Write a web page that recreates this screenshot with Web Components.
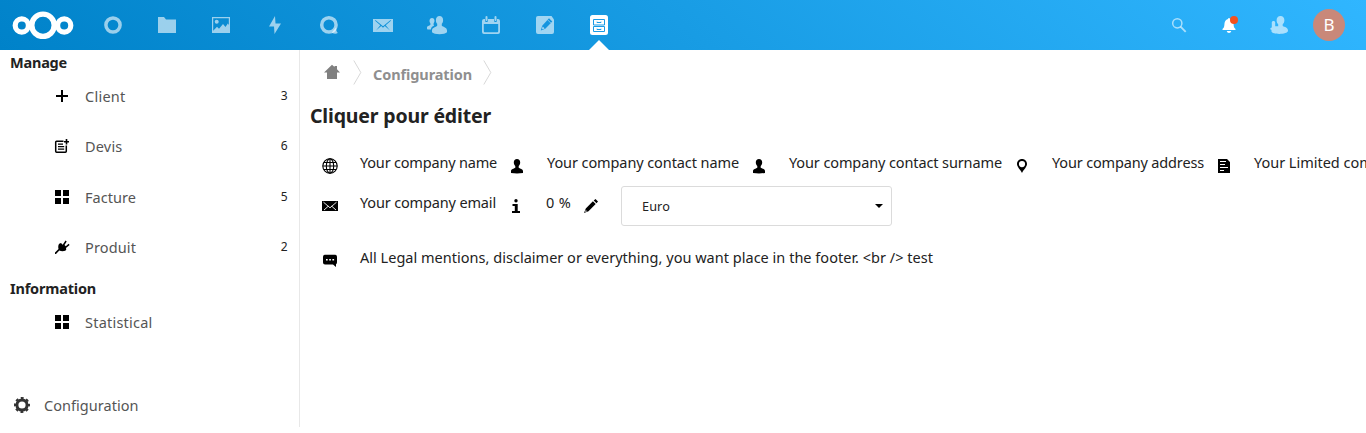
<!DOCTYPE html>
<html lang="fr">
<head>
<meta charset="utf-8">
<title>Configuration</title>
<style>
html,body{margin:0;height:100%;overflow:hidden;background:#fff}
body{font-family:"Noto Sans","Open Sans",sans-serif;font-size:14.5px;color:#222}
</style>
</head>
<body>
<invoice-app></invoice-app>
<script>
const define=(name,html,setup)=>{
  const t=document.createElement('template');t.innerHTML=html;
  customElements.define(name,class extends HTMLElement{
    constructor(){super();this.attachShadow({mode:'open'}).append(t.content.cloneNode(true));}
    connectedCallback(){if(setup)setup(this,this.shadowRoot);}
  });
};

/* Icons: [viewBox, markup] */
const icons={
  logo:['0 0 62 28','<g fill="none" stroke="#fff"><circle cx="31" cy="14.3" r="11.2" stroke-width="5.4"/><circle cx="9.8" cy="14.5" r="6.6" stroke-width="5.2"/><circle cx="52.2" cy="14.5" r="6.6" stroke-width="5.2"/></g>'],
  ring:['0 0 20 20','<circle cx="10" cy="10" r="7.1" fill="none" stroke="currentColor" stroke-width="3.5"/>'],
  folder:['0 0 20 20','<path d="M1 2h6l2 2.5h10V18H1z"/>'],
  image:['0 0 20 20','<path fill-rule="evenodd" d="M1 2h18v16H1zM2.2 3.2v12.6l3.8-4 2 2 4-4.8 2.5 3 2.3-3.500 1 1.500V3.200z"/><circle cx="5.700" cy="6.700" r="2"/>'],
  bolt:['0 0 20 20','<path d="M10 1 4 11.500h5L9.500 19 16 8.500h-5.500z"/>'],
  talk:['0 0 20 20','<circle cx="9.900" cy="9.900" r="7.200" fill="none" stroke="currentColor" stroke-width="3.500"/><path d="M17 12.500q0 3.500 1.800 5.500-2.800 1.600-6-.5z"/>'],
  mail:['0 0 20 20','<path fill-rule="evenodd" d="M0 4h20v13H0zM1.800 5.500 7.300 10.300 3 15.600 8.200 11.100 10 12.800l1.800-1.700 5.200 4.500-4.300-5.300 5.500-4.800-.9-.2L10 11.200 2.700 5.300z"/>'],
  contacts:['0 0 20 20','<path d="M12.500 1c2.400 0 3.700 1.700 3.600 4.200 0 1.800-.7 2.700-1.300 3.600v2c1.500 1.300 5.200 1.600 5.200 4.700v1.800c-2 2.500-13 2.500-15 0 0-3 .1-3.600 1.400-4.400 1.700-1 3.200-1.400 3.800-2.100v-2C9.500 8 8.900 7 8.900 5.200 8.900 2.700 10.200 1 12.500 1z"/><path d="M5 3c1.600 0 2.500 1.200 2.500 2.800 0 1.300-.4 2-.9 2.600v1.500l.6.6c-2 1-3 1.800-3.300 4H.700c-.7-.2-.7-.8-.7-2.300 0-1 2.200-1.400 3.400-2.500V8.400C2.900 7.800 2.500 7.100 2.500 5.800 2.500 4.200 3.500 3 5 3z"/>'],
  calendar:['0 0 20 20','<path fill-rule="evenodd" d="M3 4h1v1.500c0 2 3 2 3 0V4h6v1.500c0 2 3 2 3 0V4h1q2 0 2 2v11q0 2-2 2H3q-2 0-2-2V6q0-2 2-2zM2.800 9v7.200q0 1 1 1h12.400q1 0 1-1V9z"/><rect x="4.500" y="1" width="2" height="5" rx="1"/><rect x="13.500" y="1" width="2" height="5" rx="1"/>'],
  notes:['0 0 20 20','<path d="M3 1h13.500L19 4.500V17q0 2-2 2H3q-2 0-2-2V3q0-2 2-2z"/><path fill="#1595df" d="m14 3.300 3.300 3.200-7 7.300L5.800 15.500l1.400-4.800z"/><path stroke="#9fd3f3" stroke-width=".7" d="m12.600 4.800 3.200 3.200"/><path fill="#b5ddf5" d="m7.600 11.500 2 2-2.500.8z"/>'],
  cabinet:['0 0 20 22','<rect x="1" y="1" width="18" height="20" rx="2.500"/><g fill="none" stroke="#1a9be6" stroke-width="1"><path d="M4.500 5.500h11v5.500h-11zM4.500 12.500h11v5h-11z"/><path d="M8 7.700v.8h4v-.8M8 14.700v.8h4v-.8"/></g>'],
  search:['0 0 16 16','<circle cx="6.300" cy="6.300" r="4.600" fill="none" stroke="currentColor" stroke-width="1.500"/><path d="m9.500 9.600 5.200 5.200" stroke="currentColor" stroke-width="1.900" fill="none"/>'],
  bell:['0 0 16 16','<path d="M8 1C7 1 7 2 7 2 4.500 2.500 3.400 5 3.400 7.500 3.200 10 3 10.500 1.500 12v1h13v-1C13 10.500 12.800 10 12.600 7.500 12.500 5 11.500 2.500 9 2c0 0 0-1-1-1zM5.700 14q.5 2 2.300 2t2.300-2z"/>'],
  people:['0 0 20 20','<path d="M11.500 1c2.500 0 3.900 1.800 3.900 4.300 0 2-.8 3-1.700 4v1.800c2 1.200 5.300 1.300 5.300 4.700 0 4-16 4-16.500.7-.2-1-.1-1.200.3-1.500C.8 15 .8 12.800 2.800 12.400V8.200c-.6-3 4-3 3.400 0v3.100h3V9.300C8.300 8.300 7.600 7.300 7.600 5.300 7.600 2.800 9 1 11.500 1z"/>'],
  plus:['0 0 16 16','<path d="M7 2h2v5h5v2H9v5H7V9H2V7h5z"/>'],
  addlist:['0 0 16 16','<path fill="none" stroke="currentColor" stroke-width="1.500" d="M9.500 3.200H2.600q-.9 0-.9.900v9.200q0 .9.900.9h8.800q.9 0 .9-.9V7.500"/><path d="M4 5.500h5v1.300H4zM4 8h6.200v1.300H4zM4 10.500h6.200v1.300H4zM11.700 1h1.600v2H15v1.600h-1.700v2h-1.600v-2H10V3h1.700z"/>'],
  grid:['0 0 16 16','<path d="M1 1h6v6H1zM9 1h6v6H9zM1 9h6v6H1zM9 9h6v6H9z"/>'],
  plug:['0 0 16 16','<path d="M5.200 4.800 7 4l1.700 1.700L11.500 1.500l1.200 1L10.500 6l1.300 1.200 2.800-2.500 1 1.200-3.600 3.200.3 1.500-1 1.200c-2 .6-4.500.4-6-.2L2 15H1v-1.500L4.500 10C4 8 4.200 6 5.200 4.800z"/>'],
  gear:['0 0 16 16','<circle cx="8" cy="8" r="5.100" fill="none" stroke="currentColor" stroke-width="3"/><circle cx="8" cy="8" r="7" fill="none" stroke="currentColor" stroke-width="2" stroke-dasharray="2.900 2.598" stroke-dashoffset="1.450"/>'],
  home:['0 0 16 16','<path d="M8 .8 10.500 3V2H13v3.200L16 8.500h-3V15H3V8.500H0z"/>'],
  sep:['0 0 9 25','<path fill="none" stroke="#d8d8d8" d="m.8.5 7 12-7 12"/>'],
  globe:['0 0 16 16','<g fill="none" stroke="currentColor" stroke-width="1.100"><circle cx="8" cy="8" r="7.200"/><ellipse cx="8" cy="8" rx="3.700" ry="7.200"/><path d="M8 .8v14.400M.8 8h14.400M2 4.500h12M2 11.500h12"/></g>'],
  person:['0 0 16 16','<path d="M8 1c2 0 3.200 1.400 3.200 3.500C11.200 6.500 10.200 7.300 9.700 8v1.700c1.500 1 4.300 1.300 4.300 3.400V15q-6 .8-12 0v-1.900C2 11 4.800 10.700 6.300 9.700V8C5.800 7.300 4.800 6.500 4.800 4.500 4.800 2.400 6 1 8 1z"/>'],
  pin:['0 0 16 16','<path fill-rule="evenodd" d="M8 1c2.900 0 5 2.200 5 5 0 3-3 5-5 9-2-4-5-6-5-9 0-2.800 2.100-5 5-5zM8 3a3 3 0 1 0 0 6.200A3 3 0 0 0 8 3z"/>'],
  doc:['0 0 16 16','<path fill-rule="evenodd" d="M2 1h9l3 3v11H2zM4 3v1h6V3zM4 6v1h5V6zM4 9v1h8V9zM4 12v1h4v-1z"/>'],
  envelope:['0 0 16 16','<path d="M0 3h16v10H0z"/><path fill="none" stroke="#fff" stroke-width=".9" d="M1.500 4.200 8 9.800l6.500-5.600M2 12l4.300-3.800M14 12 9.700 8.200"/>'],
  info:['0 0 16 16','<circle cx="8" cy="2.700" r="1.700"/><path d="M4.500 6h5.200v7H12v2H4v-2h2.800V8H4.500z"/>'],
  pencil:['0 0 16 16','<path d="m12.500 1 2.500 2.500-1.500 1.700L10.700 2.500zM9.900 3.300l2.800 2.700-7.200 7.300L1 15l1.800-4.500z"/><path d="m2.700 12.100 1.300 1.200-1.800.7z" fill="#fff"/>'],
  comment:['0 0 16 16','<path d="M3 2.800h10q2 0 2 2v5.500q0 1.500-1 1.900V15l-3-2.500H3q-2 0-2-2V4.800q0-2 2-2z"/><path fill="#fff" d="M4 7h1.700v1.500H4zM7.200 7h1.700v1.500H7.200zM10.400 7h1.700v1.500h-1.700z"/>'],
  caret:['0 0 8 4','<path d="M0 0h8L4 4z"/>']
};
define('app-icon','<style>:host{display:block;flex:none}svg{display:block;width:100%;height:100%;fill:currentColor}</style><svg></svg>',(el,r)=>{
  const icon=icons[el.getAttribute('name')],s=r.querySelector('svg');
  if(!icon)return;
  s.setAttribute('viewBox',icon[0]);s.innerHTML=icon[1];
  const [w,h]=(el.getAttribute('size')||'16 16').split(' ');
  el.style.width=w+'px';el.style.height=h+'px';
});

/* One line of text, tracked so that it takes up the width given in "w" */
define('fit-text','<style>:host{display:block;flex:none;white-space:nowrap;line-height:18px}span{display:inline-block}</style><span><slot></slot></span>',(el,r)=>{
  const w=+el.getAttribute('w'),s=r.querySelector('span');
  const extra=(w-s.getBoundingClientRect().width)/el.textContent.length;
  s.style.letterSpacing=extra+'px';
  el.style.width=w+'px';
});

define('top-bar',`<style>
:host{display:flex;height:50px;flex:none;align-items:center;justify-content:space-between;background:linear-gradient(40deg,#0082c9 0%,#30b6ff 100%);color:#fff;overflow:hidden}
.left,.right{display:flex;align-items:center}
.left{padding-left:12px}
nav{display:flex;padding-left:12px}
nav>span{width:54px;height:50px;display:grid;place-items:center;color:rgba(255,255,255,.6)}
nav>.on{color:#fff;position:relative}
.on::after{content:"";position:absolute;left:17px;bottom:0;border:10px solid transparent;border-top:0;border-bottom-color:#fff}
.right>span{width:50px;height:50px;display:grid;place-items:center;position:relative}
.dim{color:rgba(255,255,255,.6)}
.dot{position:absolute;left:26px;top:16px;width:8px;height:8px;border-radius:50%;background:#f4511e}
.avatar{width:32px;height:32px;border-radius:50%;background:#c98879;display:grid;place-items:center;font:17px/24px "Noto Sans",sans-serif;margin:0 21px 0 9px}
</style>
<div class="left"><app-icon name="logo" size="62 28"></app-icon><nav></nav></div>
<div class="right"><span class="dim"><app-icon name="search"></app-icon></span><span><app-icon name="bell"></app-icon><i class="dot"></i></span><span class="dim"><app-icon name="people" size="20 20"></app-icon></span><div class="avatar">B</div></div>`,(el,r)=>{
  r.querySelector('nav').innerHTML=['ring','folder','image','bolt','talk','mail','contacts','calendar','notes','cabinet']
    .map(n=>`<span${n==='cabinet'?' class="on"':''}><app-icon name="${n}" size="20 ${n==='cabinet'?22:20}"></app-icon></span>`).join('');
});

const namedIcon=(el,r)=>{
  const i=document.createElement('app-icon');
  i.setAttribute('name',el.getAttribute('icon'));
  r.querySelector('i').append(i);
};

define('nav-item',`<style>
:host{box-sizing:border-box;display:flex;align-items:center;height:50.400px;padding:0 11.500px 2.400px 54px;color:#555}
i{color:#000}
.label{margin-left:15px;flex:1}
.count{font-size:12px;line-height:18px;color:#222}
</style><i></i><div class="label"><slot></slot></div><span class="count"></span>`,(el,r)=>{
  namedIcon(el,r);
  r.querySelector('.count').textContent=el.getAttribute('count')||'';
});

define('side-bar',`<style>
:host{display:flex;flex-direction:column;width:299px;height:377px;flex:none;border-right:1px solid #e8e8e8}
.head{font-weight:700;padding:3px 0 0 10px;height:19px}
.head.info{padding-top:5px;height:19.600px}
.foot{margin-top:auto;display:flex;align-items:center;gap:14px;padding:0 0 13px 14px;color:#555}
.foot app-icon{color:#333}
</style>
<div class="head"><fit-text w="57">Manage</fit-text></div>
<nav-item icon="plus" count="3"><fit-text w="40.500">Client</fit-text></nav-item>
<nav-item icon="addlist" count="6"><fit-text w="37.500">Devis</fit-text></nav-item>
<nav-item icon="grid" count="5"><fit-text w="51">Facture</fit-text></nav-item>
<nav-item icon="plug" count="2"><fit-text w="51">Produit</fit-text></nav-item>
<div class="head info"><fit-text w="86">Information</fit-text></div>
<nav-item icon="grid"><fit-text w="67.500">Statistical</fit-text></nav-item>
<div class="foot"><app-icon name="gear"></app-icon><fit-text w="94.500">Configuration</fit-text></div>`);

define('field-item',`<style>
:host{display:flex;flex:none;align-items:flex-start}
i{margin:5px 22px 0 12px;color:#000}
</style><i></i><slot></slot>`,namedIcon);

define('currency-select',`<style>
:host{box-sizing:border-box;display:flex;align-items:center;justify-content:space-between;width:271px;height:40px;border:1px solid #dbdbdb;border-radius:3px;padding:0 8px 0 20px;font-size:12.700px;color:#222}
app-icon{color:#000}
</style><slot></slot><app-icon name="caret" size="8 4"></app-icon>`);

define('main-view',`<style>
:host{display:block;flex:1;min-width:0;overflow:hidden;padding-left:10px}
.crumbs{display:flex;height:50px;color:#8f8f8f;font-weight:700;align-items:flex-start}
.crumbs .home{margin:14px 13px 0 14px;color:#808080}
.crumbs .sep{margin-top:10px}
.crumbs fit-text{margin:15px 11px 0 11px}
h2{margin:0;height:53px;padding-top:3px;box-sizing:border-box;font-size:19.500px;font-weight:700}
h2 fit-text{line-height:26px}
.row{display:flex;align-items:flex-start}
.one{height:40px}.two{height:54px}
.three fit-text{margin-top:1px}
currency-select{margin-top:-7px}
</style>
<div class="crumbs"><app-icon class="home" name="home"></app-icon><app-icon class="sep" name="sep" size="9 25"></app-icon><fit-text w="99">Configuration</fit-text><app-icon class="sep" name="sep" size="9 25"></app-icon></div>
<h2><fit-text w="181">Cliquer pour éditer</fit-text></h2>
<div class="row one">
<field-item icon="globe"><fit-text w="137">Your company name</fit-text></field-item>
<field-item icon="person"><fit-text w="192">Your company contact name</fit-text></field-item>
<field-item icon="person"><fit-text w="213">Your company contact surname</fit-text></field-item>
<field-item icon="pin"><fit-text w="152">Your company address</fit-text></field-item>
<field-item icon="doc"><fit-text w="152">Your Limited company</fit-text></field-item>
</div>
<div class="row two">
<field-item icon="envelope"><fit-text w="136">Your company email</fit-text></field-item>
<field-item icon="info"><fit-text w="25">0 %</fit-text></field-item>
<field-item icon="pencil"><currency-select><fit-text w="28">Euro</fit-text></currency-select></field-item>
</div>
<div class="row three">
<field-item icon="comment"><fit-text w="573">All Legal mentions, disclaimer or everything, you want place in the footer. &lt;br /&gt; test</fit-text></field-item>
</div>`);

define('invoice-app','<style>:host{display:flex;flex-direction:column;height:100%}.body{display:flex;flex:1;min-height:0}</style><top-bar></top-bar><div class="body"><side-bar></side-bar><main-view></main-view></div>');
</script>
</body>
</html>
